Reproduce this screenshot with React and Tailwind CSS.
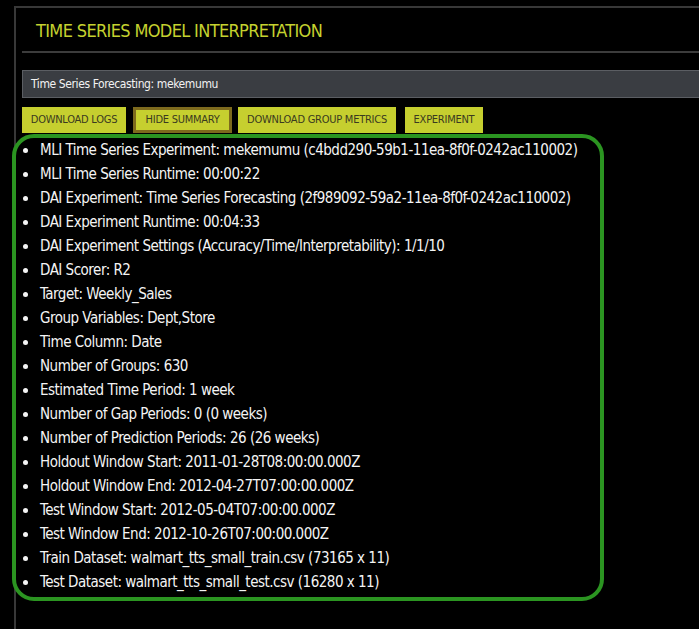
import React from "react";

const items = [
  "MLI Time Series Experiment: mekemumu (c4bdd290-59b1-11ea-8f0f-0242ac110002)",
  "MLI Time Series Runtime: 00:00:22",
  "DAI Experiment: Time Series Forecasting (2f989092-59a2-11ea-8f0f-0242ac110002)",
  "DAI Experiment Runtime: 00:04:33",
  "DAI Experiment Settings (Accuracy/Time/Interpretability): 1/1/10",
  "DAI Scorer: R2",
  "Target: Weekly_Sales",
  "Group Variables: Dept,Store",
  "Time Column: Date",
  "Number of Groups: 630",
  "Estimated Time Period: 1 week",
  "Number of Gap Periods: 0 (0 weeks)",
  "Number of Prediction Periods: 26 (26 weeks)",
  "Holdout Window Start: 2011-01-28T08:00:00.000Z",
  "Holdout Window End: 2012-04-27T07:00:00.000Z",
  "Test Window Start: 2012-05-04T07:00:00.000Z",
  "Test Window End: 2012-10-26T07:00:00.000Z",
  "Train Dataset: walmart_tts_small_train.csv (73165 x 11)",
  "Test Dataset: walmart_tts_small_test.csv (16280 x 11)",
];

const font = { fontFamily: '"DejaVu Sans Condensed", "Liberation Sans Narrow", "Liberation Sans", sans-serif' };

export default function App() {
  return (
    <div className="w-[699px] h-[629px] bg-black overflow-hidden pl-[14px] pt-[6px]" style={font}>
      <div className="border-l-2 border-t-2 border-[#383838] h-[700px] w-[720px] pl-[6px]">
        <div className="h-[45px] flex items-center pl-[14px] border-b-2 border-[#3c3c3c]">
          <span className="text-[18px] tracking-[-0.65px] text-[#c5d22f] leading-none pt-[2px]">TIME SERIES MODEL INTERPRETATION</span>
        </div>
        <div className="mt-[17px] h-[28px] border border-[#5b5e63] bg-[#3a3d42] pl-[8px] flex items-center text-[12px] tracking-[-0.4px] text-[#f2f2f2]">
          Time Series Forecasting: mekemumu
        </div>
        <div className="mt-[9px] flex h-[26px] text-[11px] tracking-[-0.25px] text-[#3a3a20]">
          <div className="w-[104px] bg-[#c6cf2f] flex items-center justify-center">DOWNLOAD LOGS</div>
          <div className="ml-[7px] w-[99px] bg-[#c6cf2f] border-[3px] border-[#7d6a1d] flex items-center justify-center">HIDE SUMMARY</div>
          <div className="ml-[6px] w-[158px] bg-[#c6cf2f] flex items-center justify-center">DOWNLOAD GROUP METRICS</div>
          <div className="ml-[9px] w-[78px] bg-[#c6cf2f] flex items-center justify-center">EXPERIMENT</div>
        </div>
        <div className="mt-[1px] -ml-[10px] w-[592px] h-[467px] border-4 border-[#2b9421] rounded-[22px]">
          <ul className="pl-[7px]">
            {items.map((t) => (
              <li key={t} className="h-[24px] flex items-center text-[15px] tracking-[-0.5px] text-[#f4f4f4] whitespace-nowrap">
                <span className="shrink-0 w-[5px] h-[5px] rounded-full bg-[#f4f4f4] mr-[12px]" />
                {t}
              </li>
            ))}
          </ul>
        </div>
      </div>
    </div>
  );
}
